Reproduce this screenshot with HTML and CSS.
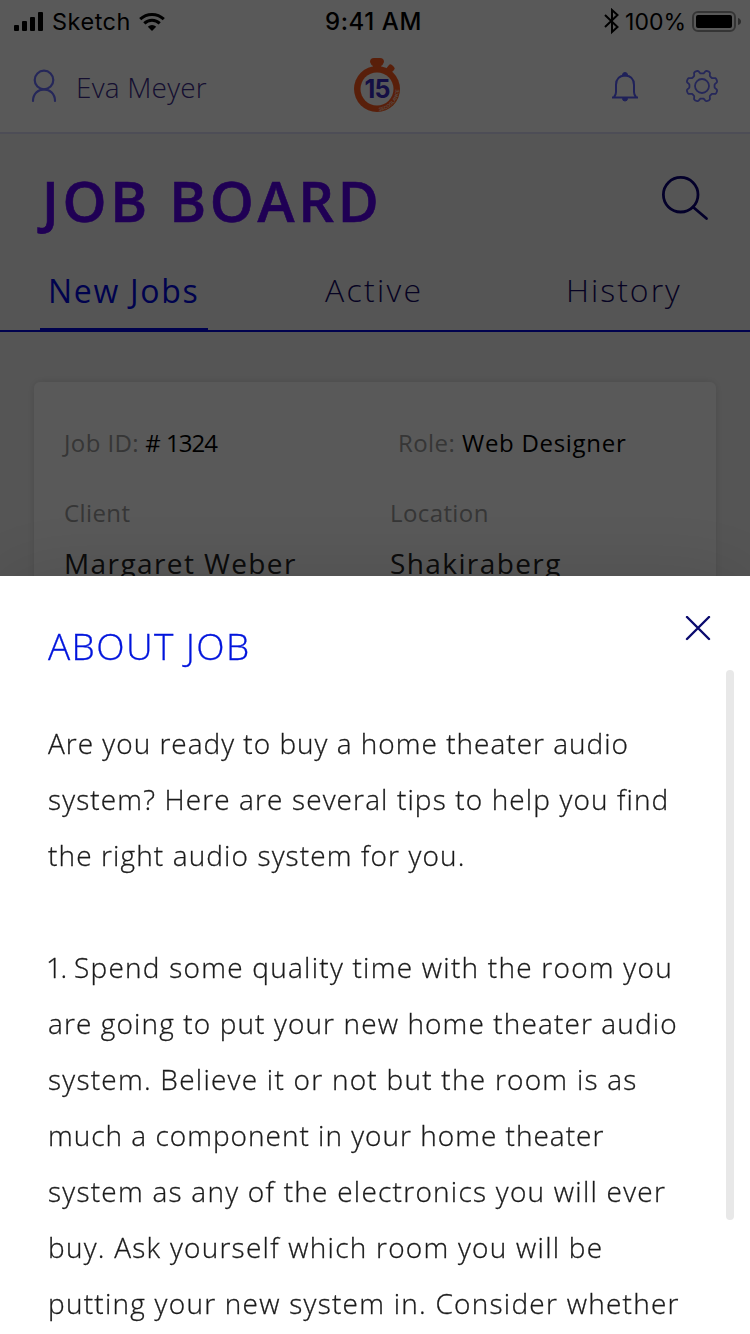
FILE: index.html
```
<!DOCTYPE html>
<html lang="en">
<head>
    <meta charset="UTF-8">
    <meta name="viewport" content="width=device-width, initial-scale=1.0">
    <title>Job Board</title>
    <link rel="stylesheet" href="styles.css">
</head>
<body>
    <div class="page">
        <div class="top">
            <div class="status">
                <div class="status-left">
                    <svg width="30" height="20" viewBox="0 0 30 20">
                        <rect x="0" y="13" width="5" height="6" rx="1"/>
                        <rect x="8" y="9" width="5" height="10" rx="1"/>
                        <rect x="16" y="5" width="5" height="14" rx="1"/>
                        <rect x="24" y="0" width="5" height="19" rx="1"/>
                    </svg>
                    <span class="carrier">Sketch</span>
                    <svg width="26" height="20" viewBox="0 0 26 20" fill="none" stroke="#000" stroke-width="3">
                        <path d="M1.2 7.2a17 17 0 0 1 23.6 0"/>
                        <path d="M5.3 11.400a11 11 0 0 1 15.4 0"/>
                        <path d="M13 19l-4.2-4.3a6 6 0 0 1 8.4 0z" fill="#000" stroke="none"/>
                    </svg>
                </div>
                <div class="time">9:41 AM</div>
                <div class="status-right">
                    <svg width="16" height="28" viewBox="0 0 16 28" fill="none" stroke="#000" stroke-width="2">
                        <path d="M1 7l12.500 12L8 24V2l5.500 5L1 19"/>
                    </svg>
                    <span class="percent">100%</span>
                    <svg width="49" height="22" viewBox="0 0 49 22">
                        <rect x="1" y="1" width="42" height="19" rx="5" fill="none" stroke="#000" stroke-opacity=".4" stroke-width="2"/>
                        <rect x="4" y="4" width="36" height="13" rx="2"/>
                        <path d="M46 7q3 1 3 3.500t-3 3.500z" fill-opacity=".5"/>
                    </svg>
                </div>
            </div>
            <div class="header">
                <div class="user">
                    <svg width="26" height="34" viewBox="0 0 26 34" fill="none" stroke="#6a6fff" stroke-width="2.200" stroke-linecap="round">
                        <circle cx="13" cy="11" r="9.300"/>
                        <path d="M2 32C2 25 7 20.400 13 20.400S24 25 24 32"/>
                    </svg>
                    <span class="username">Eva Meyer</span>
                </div>
                <svg class="logo" width="48" height="56" viewBox="0 0 48 56">
                    <g fill="#ff5a1f">
                        <path d="M17 5q0-4 4-4h6q4 0 4 4-1 3-3 4v5h-8V9q-2-1-3-4z"/>
                        <path d="M32 13l4-5q1-1.500 3 0l2 2q1.500 1.500 0 3l-4 4z"/>
                        <circle cx="24" cy="32" r="23"/>
                    </g>
                    <circle cx="24" cy="32" r="16.500" fill="#fff"/>
                    <path id="ring" d="M26 53.900A22 22 0 0 0 46 31" fill="none"/>
                    <text class="logo-ring"><textPath href="#ring">SECOGLANCE</textPath></text>
                    <text class="logo-num" x="24" y="41" text-anchor="middle">15</text>
                </svg>
                <div class="actions">
                    <svg width="28" height="34" viewBox="0 0 28 34" fill="none" stroke="#5a5fff" stroke-width="2">
                        <path d="M1 28.500h26M3 28q2-2 2-5v-7q0-9 9-9.500 9 .5 9 9.500v7q0 3 2 5"/>
                        <path d="M11.500 6a2.500 2.500 0 0 1 5 0zM11.500 29.500a2.500 2.500 0 0 0 5 0z" fill="#5a5fff" stroke-width="1"/>
                    </svg>
                    <svg width="34" height="34" viewBox="0 0 34 34" fill="none" stroke="#6a6fff" stroke-width="1.800" stroke-linejoin="round">
                        <circle cx="17" cy="17" r="7"/>
                        <path id="gear"/>
                    </svg>
                </div>
            </div>
        </div>
        <div class="board">
            <h1>JOB BOARD</h1>
            <svg width="50" height="48" viewBox="0 0 50 48" fill="none" stroke="#0a0078" stroke-width="2.800" stroke-linecap="round">
                <circle cx="20.700" cy="20.700" r="17.300"/>
                <path d="M33 33l13.500 11.500"/>
            </svg>
        </div>
        <div class="tabs">
            <div class="tab active">New Jobs</div>
            <div class="tab second">Active</div>
            <div class="tab third">History</div>
        </div>
        <div class="card">
            <div class="job-id"><span>Job ID:</span> # 1324</div>
            <div class="job-role"><span>Role:</span> Web Designer</div>
            <div class="label">Client</div>
            <div class="label">Location</div>
            <div class="value">Margaret Weber</div>
            <div class="value">Shakiraberg</div>
        </div>
    </div>
    <div class="overlay">
        <div class="modal">
            <div class="modal-header">
                <h2>ABOUT JOB</h2>
                <svg width="26" height="26" viewBox="0 0 26 26" fill="none" stroke="#0a0a6e" stroke-width="2.400" stroke-linecap="round">
                    <path d="M2 1l22 22M24 1L2 23"/>
                </svg>
            </div>
            <p>Are you ready to buy a home theater audio<br>
            <span class="wide">system? Here are several tips to help you find</span><br>
            <span class="wide">the right audio system for you.</span></p>
            <p><span class="number">1.</span> <span class="wider">Spend some quality time with the room you</span><br>
            <span class="wide">are going to put your new home theater audio</span><br>
            <span class="wider">system. Believe it or not but the room is as</span><br>
            much a component in your home theater<br>
            <span class="wider">system as any of the electronics you will ever</span><br>
            <span class="wider">buy. Ask yourself which room you will be</span><br>
            <span class="wider">putting your new system in. Consider whether</span></p>
            <div class="scrollbar"></div>
        </div>
    </div>
    <script>
        // eight rounded teeth around the centre of the icon
        let d = '';
        for(let i = 0; i <= 144; i++){
            let a = i / 144 * Math.PI * 2;
            let r = 14.2 + 1.7 * Math.tanh(2.2 * Math.cos(8 * (a - Math.PI / 8)));
            d += (i ? 'L' : 'M') + (17 + r * Math.cos(a)).toFixed(2) + ' ' + (17 + r * Math.sin(a)).toFixed(2);
        }
        document.getElementById('gear').setAttribute('d', d + 'z');
    </script>
</body>
</html>
```

FILE: styles.css
```
*{
    box-sizing: border-box;
    margin: 0;
    padding: 0;
}
body{
    width: 750px;
    height: 1334px;
    overflow: hidden;
    font-family: 'Open Sans', sans-serif;
    font-weight: 300;
}
svg{
    display: block;
    flex: none;
}
.page{
    height: 1334px;
    background-color: #f4f4f4;
}
.top{
    height: 134px;
    background-color: #fff;
    border-bottom: 2px solid #dcdcf6;
}
.status{
    display: grid;
    grid-template-columns: 1fr auto 1fr;
    height: 40px;
    padding: 0 9px 0 14px;
    font-family: 'Inter', sans-serif;
    font-weight: 400;
    font-size: 23px;
    line-height: 40px;
}
.status-left, .status-right{
    display: flex;
    align-items: center;
}
.status-right{
    justify-content: flex-end;
}
.carrier{
    margin: 0 8px 0 8px;
    font-size: 23.5px;
    letter-spacing: 0.5px;
}
.time{
    margin: 0 4px 0 -4px;
    font-size: 24px;
    font-weight: 500;
    line-height: 43px;
    letter-spacing: 0.6px;
}
.percent{
    margin: 0 6px 0 5px;
}
.header{
    display: grid;
    grid-template-columns: 1fr auto 1fr;
    height: 92px;
    padding: 0 31px;
}
.user{
    display: flex;
    padding-top: 29px;
}
.username{
    margin-left: 19px;
    font-size: 28px;
    line-height: 36px;
    letter-spacing: 0.2px;
    color: #3c2d8c;
}
.logo{
    margin: 17px -2px 0 2px;
}
.logo-num{
    font-family: 'Inter', sans-serif;
    font-size: 25px;
    font-weight: 700;
    letter-spacing: -1px;
    fill: #3b2bc4;
}
.logo-ring{
    font-family: 'Inter', sans-serif;
    font-size: 4.6px;
    font-weight: 600;
    fill: #ffd9c8;
}
.actions{
    display: flex;
    justify-content: flex-end;
    gap: 46px;
    padding-top: 29px;
}
.board{
    display: flex;
    justify-content: space-between;
    height: 122px;
    padding: 40px 40px 0 42px;
}
h1{
    font-size: 56px;
    font-weight: 600;
    line-height: 52px;
    letter-spacing: 3.7px;
    color: #5a00f0;
    -webkit-text-stroke: 0.6px #5a00f0;
}
.tabs{
    display: flex;
    height: 76px;
    padding: 0 40px;
    border-bottom: 2px solid #0008e0;
    font-size: 32px;
    line-height: 68px;
    letter-spacing: 2px;
    color: #140a64;
}
.tab{
    height: 76px;
}
.active{
    width: 168px;
    padding-left: 8px;
    border-bottom: 4px solid #0008e0;
    font-weight: 400;
    line-height: 69px;
    letter-spacing: 1.7px;
    color: #0008e0;
}
.second{
    width: 241px;
    margin-left: 117px;
    letter-spacing: 2.3px;
}
.card{
    display: grid;
    grid-template-columns: 326px 1fr;
    grid-template-rows: 70px 50px 50px;
    width: 682px;
    height: 500px;
    margin: 50px 0 0 34px;
    padding: 36px 30px;
    border-radius: 6px;
    background-color: #fff;
    box-shadow: 0 0 8px rgba(0, 0, 0, 0.12);
    font-size: 24px;
    font-weight: 400;
    line-height: 50px;
}
.job-id{
    letter-spacing: -1px;
    word-spacing: 1px;
}
.job-role{
    padding-left: 8px;
    letter-spacing: 0.7px;
}
.card span, .label{
    letter-spacing: 0.4px;
    word-spacing: 0;
    color: #9a9a9a;
}
.value{
    font-size: 28px;
    letter-spacing: 1.4px;
    color: #222;
}
.overlay{
    position: fixed;
    top: 0;
    left: 0;
    display: flex;
    align-items: flex-end;
    width: 750px;
    height: 1334px;
    background-color: rgba(0, 0, 0, 0.65);
}
.modal{
    position: relative;
    width: 750px;
    height: 758px;
    padding: 40px 39px 0 48px;
    overflow: hidden;
    background-color: #fff;
    box-shadow: 0 0 80px rgba(0, 0, 0, 0.15);
}
.modal-header{
    display: flex;
    justify-content: space-between;
    height: 99px;
}
h2{
    font-size: 37px;
    font-weight: 300;
    line-height: 60px;
    letter-spacing: 1.4px;
    color: #0014dc;
    -webkit-text-stroke: 0.3px #0014dc;
}
p{
    margin-bottom: 56px;
    font-size: 28px;
    line-height: 56px;
    letter-spacing: 1px;
    white-space: nowrap;
    color: #1a1a1a;
    -webkit-text-stroke: 0.3px #1a1a1a;
}
.wide{
    letter-spacing: 1.12px;
}
.wider{
    letter-spacing: 1.25px;
}
.number{
    margin-left: -2px;
    letter-spacing: -1.5px;
}
.scrollbar{
    position: absolute;
    top: 94px;
    right: 16px;
    width: 8px;
    height: 550px;
    border-radius: 4px;
    background-color: #e8e8e8;
}
```
